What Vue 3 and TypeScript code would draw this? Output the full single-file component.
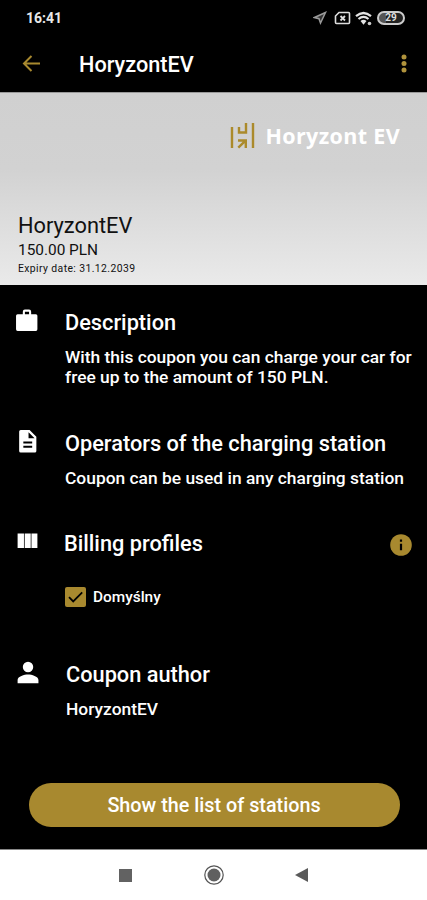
<script setup lang="ts">
import { ref } from 'vue'

interface Section {
  key: string
  title: string
  lines: string[]
  icon: string
}

const sections: Section[] = [
  {
    key: 'description',
    title: 'Description',
    lines: ['With this coupon you can charge your car for', 'free up to the amount of 150 PLN.'],
    icon: 'M9.500 1.500h4a2 2 0 0 1 2 2V6H20a1.500 1.500 0 0 1 1.500 1.500v13A1.500 1.500 0 0 1 20 22H2.500A1.500 1.500 0 0 1 1 20.500v-13A1.500 1.500 0 0 1 2.500 6h5V3.500a2 2 0 0 1 2-2zm0 2V6h4V3.500z',
  },
  {
    key: 'operators',
    title: 'Operators of the charging station',
    lines: ['Coupon can be used in any charging station'],
    icon: 'M5.500 1h8.500l6.500 6.500V21a1.500 1.500 0 0 1-1.500 1.500H5.500A1.500 1.500 0 0 1 4 21V2.500A1.500 1.500 0 0 1 5.500 1zm7.500 2v5.800h5.800zM8 12v2h8.500v-2zm0 4v2h8.500v-2z',
  },
  {
    key: 'billing',
    title: 'Billing profiles',
    lines: [],
    icon: 'M2.500 4.200H8.600v14H2.500zM9.300 4.200h5.800v14H9.300zM15.800 4.200h5.700v14h-5.700z',
  },
  {
    key: 'author',
    title: 'Coupon author',
    lines: ['HoryzontEV'],
    icon: 'M12.500 11.700a5 5 0 1 0 0-10 5 5 0 0 0 0 10zM2.500 22.200v-3c0-3.300 6.500-5.200 10-5.200s10 1.900 10 5.200v3z',
  },
]

const checked = ref(true)
</script>

<template>
  <main class="screen">
    <div class="status">
      <span class="time">16:41</span>
      <div class="indicators">
        <svg class="loc" width="14" height="14" viewBox="0 0 14 14"><path d="M12.500 1.500 1.500 6.500l4.500 1.200L7.500 12z" fill="#333" stroke="#999" stroke-width="1.500" /></svg>
        <svg class="sim" width="17" height="14" viewBox="0 0 17 14"><path d="M5 1.500h9.500a1 1 0 0 1 1 1v9a1 1 0 0 1-1 1h-12a1 1 0 0 1-1-1V5z" fill="none" stroke="#ddd" stroke-width="1.600" /><path d="m6.500 5 4.500 4.500M11 5 6.500 9.500" stroke="#ddd" stroke-width="1.800" /></svg>
        <svg class="wifi" width="18" height="15" viewBox="0 0 18 15"><g fill="none" stroke="#e4e4e4" stroke-width="2.200"><path d="M1 5.200q7.500-6.400 15 0M3.500 8q5-4.200 10 0" /></g><path d="M5.500 10q3-2.500 6 0l-3 3.700z" fill="#e4e4e4" /><circle cx="14.500" cy="12.500" r="1.800" fill="#ccc" /></svg>
        <span class="battery">29</span>
      </div>
    </div>

    <header class="appbar">
      <svg class="back" width="20" height="18" viewBox="0 0 20 18"><path d="M19 8.500H3M10.500 1 3 8.500l7.500 7.500" fill="none" stroke="#a8892f" stroke-width="2" /></svg>
      <h1>HoryzontEV</h1>
      <svg class="more" width="6" height="20" viewBox="0 0 6 20" fill="#b0933c"><circle cx="3" cy="3" r="2.500" /><circle cx="3" cy="9.500" r="2.500" /><circle cx="3" cy="16" r="2.500" /></svg>
    </header>

    <section class="hero">
      <div class="brand">
        <svg width="25" height="26" viewBox="0 0 25 26" fill="none" stroke="#ab8a2b" stroke-width="2.400"><path d="M2 4v21M23 0v25M9 4v5.500h7V0M8 17.500h7.800V25M15.500 17.700 8.300 24.600" /></svg>
        <span>Horyzont EV</span>
      </div>
      <div class="coupon">
        <div class="name">HoryzontEV</div>
        <div class="amount">150.00 PLN</div>
        <div class="expiry">Expiry date: 31.12.2039</div>
      </div>
    </section>

    <div class="content">
      <section v-for="s in sections" :key="s.key" class="row" :class="s.key">
        <svg class="icon" width="25" height="25" viewBox="0 0 24 24"><path :d="s.icon" fill="#fff" fill-rule="evenodd" /></svg>
        <div class="text">
          <h2><span>{{ s.title }}</span>
            <svg v-if="s.key === 'billing'" class="info" width="22" height="22" viewBox="0 0 22 22"><circle cx="11" cy="11" r="10.800" fill="#a8892f" /><path d="M9.900 5.500h2.200v2.200H9.900zM9.900 9.700h2.200v6.600H9.900z" fill="#000" /></svg>
          </h2>
          <p v-if="s.lines.length"><span v-for="line in s.lines" :key="line" class="line">{{ line }}</span></p>
          <div v-else class="profile" role="checkbox" :aria-checked="checked" @click="checked = !checked">
            <svg width="21" height="20" viewBox="0 0 21 20"><rect width="21" height="20" rx="2" fill="#a8892f" /><path v-if="checked" d="m4 10.200 4.200 4.200 9-9" fill="none" stroke="#000" stroke-width="1.800" /></svg>
            <span>Domyślny</span>
          </div>
        </div>
      </section>
      <button class="cta" type="button"><span>Show the list of stations</span></button>
    </div>

    <nav class="navbar">
      <svg width="13" height="13" viewBox="0 0 13 13"><path d="M0 0h13v13H0z" fill="#626262" /></svg>
      <svg width="20" height="20" viewBox="0 0 20 20"><circle cx="10" cy="10" r="9.200" fill="none" stroke="#555" stroke-width="1.200" /><circle cx="10" cy="10" r="6.500" fill="#606060" /></svg>
      <svg width="13" height="14" viewBox="0 0 13 14"><path d="M0 7 13 0v14z" fill="#5a5a5a" /></svg>
    </nav>
  </main>
</template>

<style>
body { background: #000; }
</style>

<style scoped>
.screen { width: 427px; height: 900px; display: flex; flex-direction: column; overflow: hidden; background: #000; color: #fff; font-family: Roboto, sans-serif; font-weight: 500; white-space: nowrap; }
svg { display: block; flex: none; }
h1, h2, p { margin: 0; font-weight: 500; }
.status { height: 36px; display: flex; justify-content: space-between; align-items: center; padding: 0 22px 0 26px; box-sizing: border-box; }
.time { font-size: 14px; font-weight: 700; line-height: 36px; color: #e8e8e8; }
.indicators { display: flex; align-items: center; }
.loc { margin-right: 1px; }
.sim { margin-left: 6px; }
.wifi { margin-left: 4px; }
.battery { width: 28px; height: 14px; margin-left: 4px; box-sizing: border-box; border: 2px solid #ccc; border-radius: 7px; font-size: 10px; line-height: 10px; font-weight: 700; text-align: center; color: #ddd; background: linear-gradient(90deg, #555 30%, #222 30%); }
.appbar { height: 56px; display: flex; align-items: center; padding: 0 20px 0 21px; }
.appbar h1 { margin-left: 38px; font-size: 21.700px; line-height: 28px; padding-top: 1px; }
.more { margin-left: auto; }
.hero { height: 193px; box-sizing: border-box; display: flex; flex-direction: column; background: linear-gradient(#d0d0d0 0, #d2d2d2 40%, #eaeaea 100%); border-top: 1px solid #999; color: #111; padding: 30px 27px 0 18px; }
.brand { display: flex; justify-content: flex-end; align-items: center; height: 26px; color: #fff; }
.brand span { margin-left: 11px; font: 700 21.500px/26px "Open Sans", sans-serif; letter-spacing: 0.350px; }
.coupon { margin-top: 63px; font-weight: 400; }
.name { font-size: 21.800px; line-height: 28px; }
.amount { font-size: 15.400px; line-height: 20px; }
.expiry { font-size: 10.400px; line-height: 17px; letter-spacing: 0.400px; }
.content { height: 564px; display: flex; flex-direction: column; padding-top: 24px; box-sizing: border-box; }
.row { display: flex; padding: 0 15px 0 15px; height: 121px; box-sizing: border-box; flex: none; }
.icon { margin-top: -1px; }
.text { flex: 1; margin-left: 25px; }
.row h2 { display: flex; justify-content: space-between; font-size: 21.750px; line-height: 28px; }
.row p { font-size: 17.400px; line-height: 20px; margin-top: 10px; }
.line { display: block; }
.operators { height: 100px; }
.billing { height: 131px; }
.billing h2 { margin-left: -1px; }
.author .text { margin-left: 26px; }
.info { margin-top: 4px; }
.profile { display: flex; align-items: center; margin-top: 28px; font-size: 15.400px; line-height: 20px; }
.profile span { margin-left: 7px; padding-top: 1px; }
.cta { width: 371px; height: 44px; margin: auto 0 22px 28.500px; padding: 0; border: 0; border-radius: 22px; background: #a8892f; color: #fff; font: 500 19.800px/44px Roboto, sans-serif; flex: none; }
.cta span { display: block; padding-top: 1px; }
.navbar { height: 51px; display: flex; align-items: center; background: #fff; border-top: 1px solid #888; box-sizing: border-box; padding: 0 119px; justify-content: space-between; }
</style>
